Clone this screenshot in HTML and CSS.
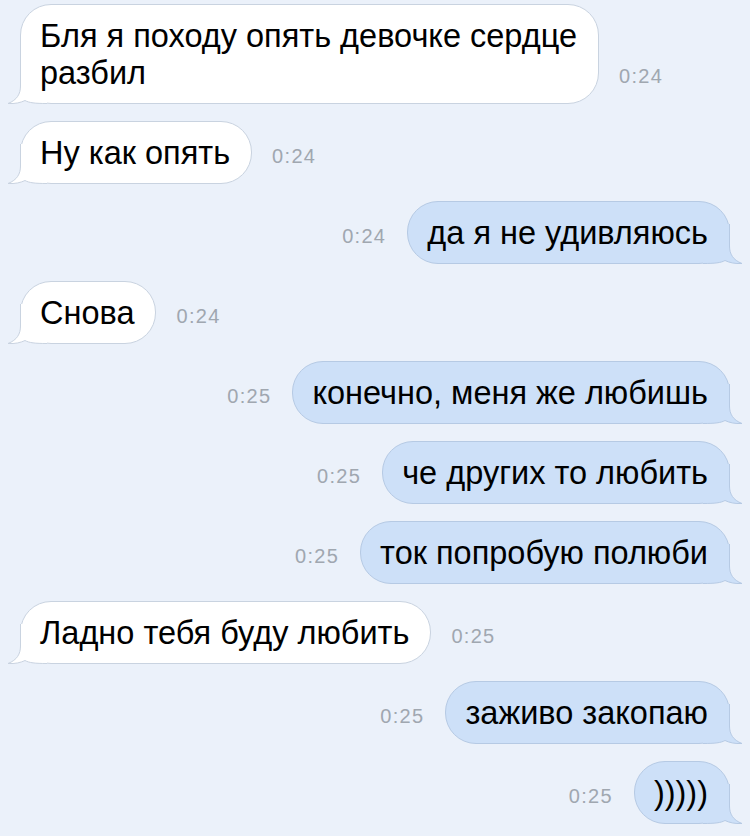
FILE: index.html
```html
<!DOCTYPE html>
<html lang="ru">
<head>
<meta charset="utf-8">
<link rel="stylesheet" href="styles.css">
</head>
<body>
<div class="chat">
  <div class="row in">
    <div class="bubble"><span class="txt">Бля я походу опять девочке сердце<br>разбил</span><svg class="tail" width="40" height="40" viewBox="0 0 40 40"><path class="tf" d="M13.5 0 L13.5 22 C13.5 30 10 36 1 39.5 C8 40 14 38.5 18 36.5 C22 38.8 28 39.5 40 39.5 L40 0 Z"/><path class="ts" d="M13.5 0 L13.5 22 C13.5 30 10 36 1 39.5 C8 40 14 38.5 18 36.5 C22 38.8 28 39.5 40 39.5"/></svg></div>
    <span class="time">0:24</span>
  </div>
  <div class="row in">
    <div class="bubble"><span class="txt">Ну как опять</span><svg class="tail" width="40" height="40" viewBox="0 0 40 40"><path class="tf" d="M13.5 0 L13.5 22 C13.5 30 10 36 1 39.5 C8 40 14 38.5 18 36.5 C22 38.8 28 39.5 40 39.5 L40 0 Z"/><path class="ts" d="M13.5 0 L13.5 22 C13.5 30 10 36 1 39.5 C8 40 14 38.5 18 36.5 C22 38.8 28 39.5 40 39.5"/></svg></div>
    <span class="time">0:24</span>
  </div>
  <div class="row out">
    <span class="time">0:24</span>
    <div class="bubble"><span class="txt">да я не удивляюсь</span><svg class="tail" width="40" height="40" viewBox="0 0 40 40"><path class="tf" d="M13.5 0 L13.5 22 C13.5 30 10 36 1 39.5 C8 40 14 38.5 18 36.5 C22 38.8 28 39.5 40 39.5 L40 0 Z"/><path class="ts" d="M13.5 0 L13.5 22 C13.5 30 10 36 1 39.5 C8 40 14 38.5 18 36.5 C22 38.8 28 39.5 40 39.5"/></svg></div>
  </div>
  <div class="row in">
    <div class="bubble"><span class="txt">Снова</span><svg class="tail" width="40" height="40" viewBox="0 0 40 40"><path class="tf" d="M13.5 0 L13.5 22 C13.5 30 10 36 1 39.5 C8 40 14 38.5 18 36.5 C22 38.8 28 39.5 40 39.5 L40 0 Z"/><path class="ts" d="M13.5 0 L13.5 22 C13.5 30 10 36 1 39.5 C8 40 14 38.5 18 36.5 C22 38.8 28 39.5 40 39.5"/></svg></div>
    <span class="time">0:24</span>
  </div>
  <div class="row out">
    <span class="time">0:25</span>
    <div class="bubble"><span class="txt">конечно, меня же любишь</span><svg class="tail" width="40" height="40" viewBox="0 0 40 40"><path class="tf" d="M13.5 0 L13.5 22 C13.5 30 10 36 1 39.5 C8 40 14 38.5 18 36.5 C22 38.8 28 39.5 40 39.5 L40 0 Z"/><path class="ts" d="M13.5 0 L13.5 22 C13.5 30 10 36 1 39.5 C8 40 14 38.5 18 36.5 C22 38.8 28 39.5 40 39.5"/></svg></div>
  </div>
  <div class="row out">
    <span class="time">0:25</span>
    <div class="bubble"><span class="txt">че других то любить</span><svg class="tail" width="40" height="40" viewBox="0 0 40 40"><path class="tf" d="M13.5 0 L13.5 22 C13.5 30 10 36 1 39.5 C8 40 14 38.5 18 36.5 C22 38.8 28 39.5 40 39.5 L40 0 Z"/><path class="ts" d="M13.5 0 L13.5 22 C13.5 30 10 36 1 39.5 C8 40 14 38.5 18 36.5 C22 38.8 28 39.5 40 39.5"/></svg></div>
  </div>
  <div class="row out">
    <span class="time">0:25</span>
    <div class="bubble"><span class="txt">ток попробую полюби</span><svg class="tail" width="40" height="40" viewBox="0 0 40 40"><path class="tf" d="M13.5 0 L13.5 22 C13.5 30 10 36 1 39.5 C8 40 14 38.5 18 36.5 C22 38.8 28 39.5 40 39.5 L40 0 Z"/><path class="ts" d="M13.5 0 L13.5 22 C13.5 30 10 36 1 39.5 C8 40 14 38.5 18 36.5 C22 38.8 28 39.5 40 39.5"/></svg></div>
  </div>
  <div class="row in">
    <div class="bubble"><span class="txt">Ладно тебя буду любить</span><svg class="tail" width="40" height="40" viewBox="0 0 40 40"><path class="tf" d="M13.5 0 L13.5 22 C13.5 30 10 36 1 39.5 C8 40 14 38.5 18 36.5 C22 38.8 28 39.5 40 39.5 L40 0 Z"/><path class="ts" d="M13.5 0 L13.5 22 C13.5 30 10 36 1 39.5 C8 40 14 38.5 18 36.5 C22 38.8 28 39.5 40 39.5"/></svg></div>
    <span class="time">0:25</span>
  </div>
  <div class="row out">
    <span class="time">0:25</span>
    <div class="bubble"><span class="txt">заживо закопаю</span><svg class="tail" width="40" height="40" viewBox="0 0 40 40"><path class="tf" d="M13.5 0 L13.5 22 C13.5 30 10 36 1 39.5 C8 40 14 38.5 18 36.5 C22 38.8 28 39.5 40 39.5 L40 0 Z"/><path class="ts" d="M13.5 0 L13.5 22 C13.5 30 10 36 1 39.5 C8 40 14 38.5 18 36.5 C22 38.8 28 39.5 40 39.5"/></svg></div>
  </div>
  <div class="row out">
    <span class="time">0:25</span>
    <div class="bubble"><span class="txt">)))))</span><svg class="tail" width="40" height="40" viewBox="0 0 40 40"><path class="tf" d="M13.5 0 L13.5 22 C13.5 30 10 36 1 39.5 C8 40 14 38.5 18 36.5 C22 38.8 28 39.5 40 39.5 L40 0 Z"/><path class="ts" d="M13.5 0 L13.5 22 C13.5 30 10 36 1 39.5 C8 40 14 38.5 18 36.5 C22 38.8 28 39.5 40 39.5"/></svg></div>
  </div>
</div>
</body>
</html>
```
FILE: styles.css
```css
html, body {
  margin: 0;
  padding: 0;
  background: #ebf1fa;
}
body {
  width: 750px;
  height: 836px;
  overflow: hidden;
  font-family: "Liberation Sans", Arial, sans-serif;
}
.chat {
  display: flex;
  flex-direction: column;
  gap: 17px;
  padding: 4px 20px 0 20px;
}
.row {
  display: flex;
  align-items: flex-end;
  gap: 20px;
}
.row.out {
  justify-content: flex-end;
  gap: 21px;
}
.bubble {
  position: relative;
  box-sizing: border-box;
  font-size: 32.5px;
  line-height: 37px;
  color: #000;
  padding: 13px 21px 11px 19px;
  border: 1px solid #c9d3e0;
  border-radius: 31px;
  background: #ffffff;
  white-space: nowrap;
}
.row.out .bubble {
  background: #cde0f8;
  border-color: #b6cae4;
}
.txt {
  position: relative;
  z-index: 1;
}
.tail {
  position: absolute;
  left: -14px;
  bottom: -1px;
  display: block;
  z-index: 0;
}
.row.out .tail {
  left: auto;
  right: -14px;
  transform: scaleX(-1);
}
.tf {
  fill: #ffffff;
  stroke: none;
}
.ts {
  fill: none;
  stroke: #c9d3e0;
  stroke-width: 1;
}
.row.out .tf {
  fill: #cde0f8;
}
.row.out .ts {
  stroke: #b6cae4;
}
.time {
  font-size: 20px;
  line-height: 20px;
  letter-spacing: 1.3px;
  color: #a0a7b0;
  margin-bottom: 18px;
}
```
